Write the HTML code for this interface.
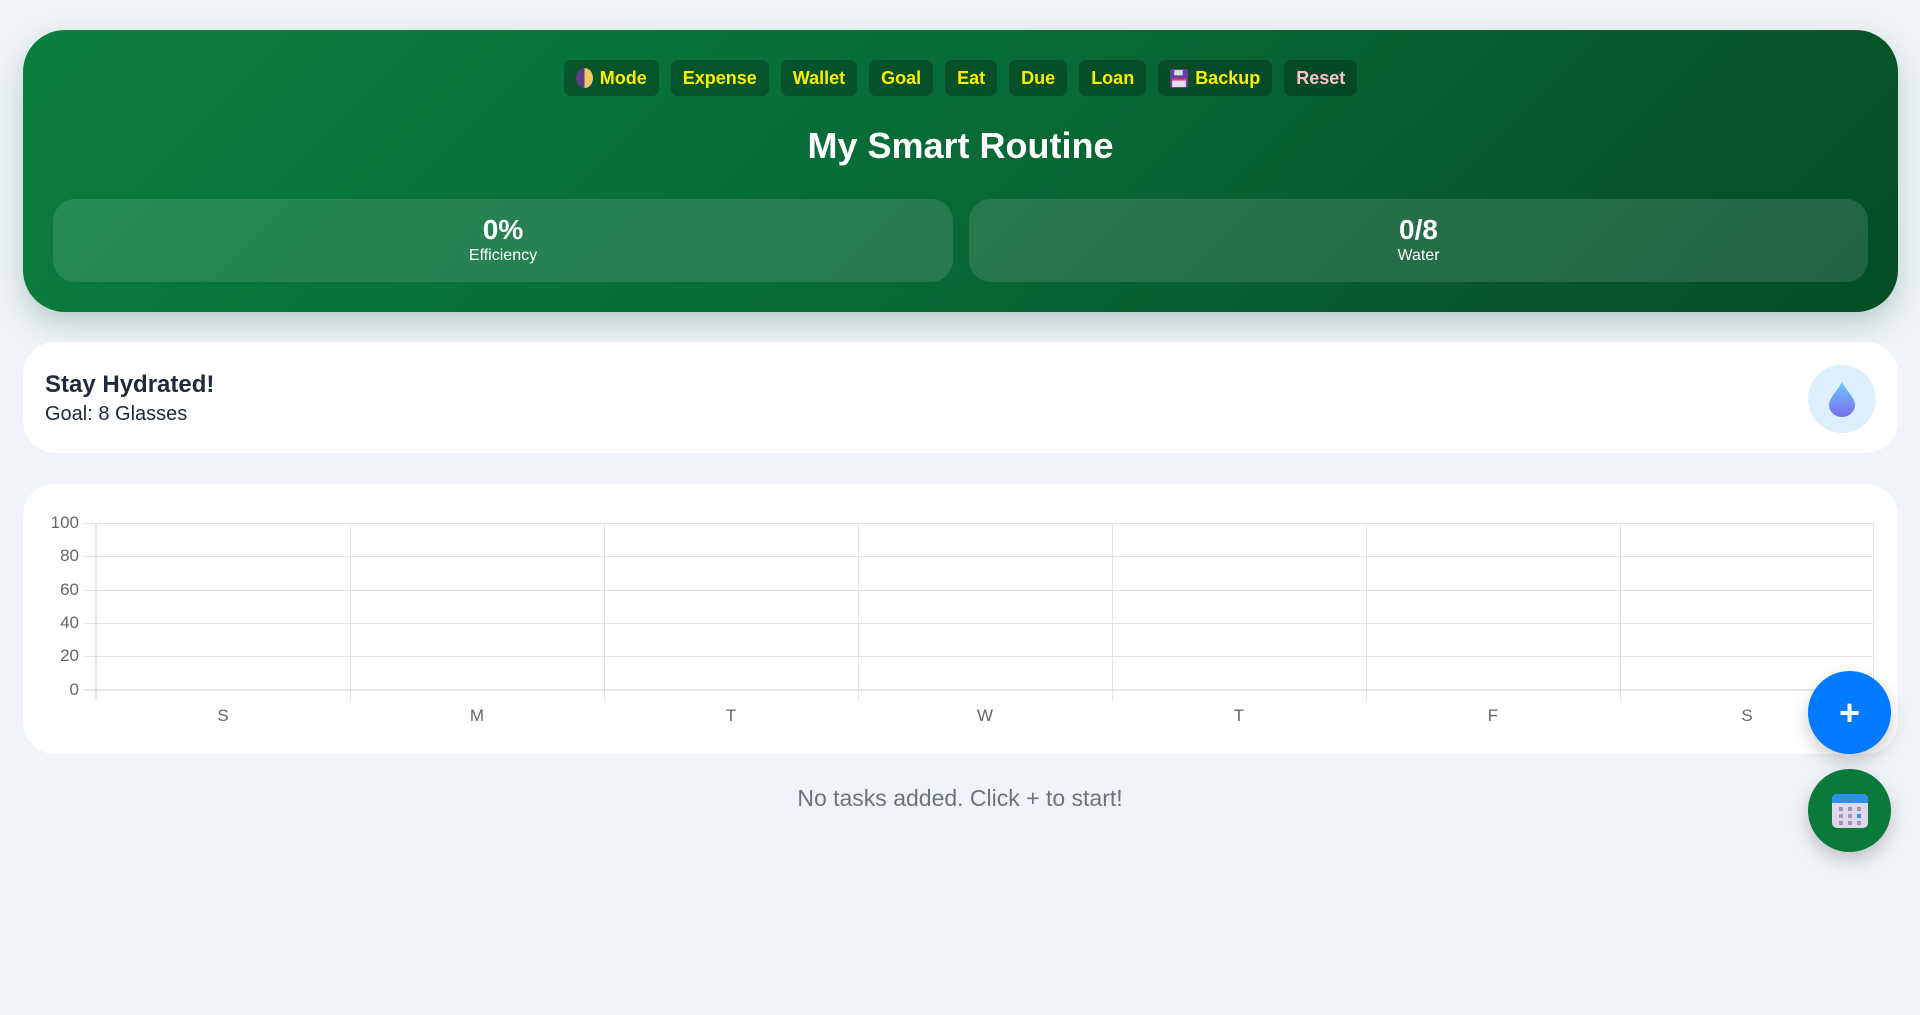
<!DOCTYPE html>
<html><head><meta charset="utf-8"><style>
*{box-sizing:border-box;margin:0;padding:0}
body{width:1920px;height:1015px;background:#f0f3f7;font-family:"Liberation Sans",Arial,sans-serif;position:relative;overflow:hidden}
.hdr{position:absolute;left:23px;top:30px;width:1875px;height:282px;border-radius:42px;background:linear-gradient(135deg,#0a7f3f 0%,#086a35 50%,#054d25 100%);box-shadow:0 12px 28px rgba(10,100,60,.25)}
.btns{position:absolute;top:30px;left:0;width:100%;display:flex;justify-content:center;gap:12px}
.b{height:36px;padding:0 12px;background:rgba(0,0,0,.25);border-radius:7px;color:#ffee00;font-weight:bold;font-size:18px;display:flex;align-items:center;gap:7px}
.title{position:absolute;top:95px;width:100%;text-align:center;color:#fff;font-weight:bold;font-size:36px}
.stat{position:absolute;top:169px;height:83px;border-radius:22px;background:rgba(255,255,255,.12);color:#fff;text-align:center}
.stat .v{font-weight:bold;font-size:28px;margin-top:15px}
.stat .l{font-size:16px;margin-top:1px}
.card{position:absolute;left:23px;width:1875px;background:#fff;border-radius:32px}
.fab{position:absolute;left:1808px;width:83px;height:83px;border-radius:50%;box-shadow:0 8px 18px rgba(0,0,0,.2);display:flex;align-items:center;justify-content:center}
</style></head><body>
<div class="hdr">
 <div class="btns">
  <div class="b"><span style="width:17px;height:20px;border-radius:50%;background:linear-gradient(90deg,#5b3d8a 50%,#f0c860 50%);display:inline-block"></span>Mode</div>
  <div class="b">Expense</div><div class="b">Wallet</div><div class="b">Goal</div><div class="b">Eat</div><div class="b">Due</div><div class="b">Loan</div>
  <div class="b"><svg width="18" height="19" viewBox="0 0 17 18"><rect x="0" y="0" width="17" height="18" rx="2" fill="#6a3fa0"/><rect x="4" y="1" width="8" height="5" fill="#ddd"/><rect x="2" y="9" width="13" height="8" fill="#e8ddf5"/><rect x="2" y="9" width="13" height="2" fill="#e04060"/></svg>Backup</div>
  <div class="b" style="color:#ffc0c8">Reset</div>
 </div>
 <div class="title">My Smart Routine</div>
 <div class="stat" style="left:30px;width:900px"><div class="v">0%</div><div class="l">Efficiency</div></div>
 <div class="stat" style="left:946px;width:899px"><div class="v">0/8</div><div class="l">Water</div></div>
</div>
<div class="card" style="top:342px;height:111px">
 <div style="position:absolute;left:22px;top:29px;color:#1e293b;font-weight:bold;font-size:24px">Stay Hydrated!</div>
 <div style="position:absolute;left:22px;top:61px;color:#1e293b;font-size:20px">Goal: 8 Glasses</div>
 <div style="position:absolute;left:1785px;top:23px;width:68px;height:68px;border-radius:50%;background:#ddeffc;display:flex;align-items:center;justify-content:center">
  <svg width="28" height="36" viewBox="0 0 28 36"><defs><linearGradient id="g" x1="0" y1="0" x2="0" y2="1"><stop offset="0" stop-color="#6cc8fa"/><stop offset="1" stop-color="#7a6cf0"/></linearGradient></defs><path d="M14 1 C10 9 1 17 1 24 A13 12 0 0 0 27 24 C27 17 18 9 14 1Z" fill="url(#g)"/></svg>
 </div>
</div>
<div class="card" style="top:484px;height:270px"></div>
<svg style="position:absolute;left:0;top:0" width="1920" height="1015">
 <g stroke="#e3e3e3" stroke-width="1">
  <line x1="84" y1="523.5" x2="1874" y2="523.5"/><line x1="84" y1="556.5" x2="1874" y2="556.5"/><line x1="84" y1="590.5" x2="1874" y2="590.5"/><line x1="84" y1="623.5" x2="1874" y2="623.5"/><line x1="84" y1="656.5" x2="1874" y2="656.5"/>
  <line x1="350.5" y1="523" x2="350.5" y2="701"/><line x1="604.5" y1="523" x2="604.5" y2="701"/><line x1="858.5" y1="523" x2="858.5" y2="701"/><line x1="1112.5" y1="523" x2="1112.5" y2="701"/><line x1="1366.5" y1="523" x2="1366.5" y2="701"/><line x1="1620.5" y1="523" x2="1620.5" y2="701"/><line x1="1873.5" y1="523" x2="1873.5" y2="701"/>
 </g>
 <line x1="84" y1="690" x2="1874" y2="690" stroke="#cfcfcf"/>
 <line x1="96" y1="523" x2="96" y2="701" stroke="#cfcfcf"/>
 <g font-family="Liberation Sans,Arial,sans-serif" font-size="17" fill="#666" text-anchor="end">
  <text x="79" y="528">100</text><text x="79" y="561">80</text><text x="79" y="595">60</text><text x="79" y="628">40</text><text x="79" y="661">20</text><text x="79" y="695">0</text>
 </g>
 <g font-family="Liberation Sans,Arial,sans-serif" font-size="17" fill="#666" text-anchor="middle">
  <text x="223" y="721">S</text><text x="477" y="721">M</text><text x="731" y="721">T</text><text x="985" y="721">W</text><text x="1239" y="721">T</text><text x="1493" y="721">F</text><text x="1747" y="721">S</text>
 </g>
</svg>
<div style="position:absolute;top:785px;width:100%;text-align:center;color:#6b7280;font-size:23px">No tasks added. Click + to start!</div>
<div class="fab" style="top:671px;background:#007bff;color:#fff;font-size:36px;font-weight:bold">+</div>
<div class="fab" style="top:769px;background:#0a7a3a">
 <svg width="36" height="36" viewBox="0 0 36 36"><rect x="0" y="1" width="36" height="34" rx="5" fill="#e0d6ee"/><path d="M0 6 a5 5 0 0 1 5-5 h26 a5 5 0 0 1 5 5 v4 h-36z" fill="#2f8ff0"/><g fill="#a09ab0"><rect x="7" y="14" width="4" height="4"/><rect x="16" y="14" width="4" height="4"/><rect x="25" y="14" width="4" height="4"/><rect x="7" y="21" width="4" height="4"/><rect x="16" y="21" width="4" height="4"/><rect x="7" y="28" width="4" height="4"/><rect x="16" y="28" width="4" height="4"/><rect x="25" y="28" width="4" height="4"/></g><rect x="25" y="21" width="4" height="4" fill="#2f8ff0"/></svg>
</div>
</body></html>
